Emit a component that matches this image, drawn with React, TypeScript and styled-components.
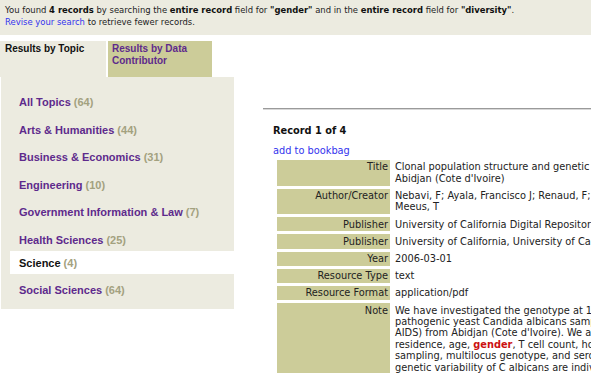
import React from "react";
import styled, { createGlobalStyle } from "styled-components";

const GlobalStyle = createGlobalStyle`
  html, body {
    margin: 0;
    padding: 0;
    background: #ffffff;
    overflow: hidden;
  }
  body {
    font-family: "DejaVu Sans", Verdana, sans-serif;
    color: #222;
  }
`;

const topics = [
  { name: "All Topics", count: 64 },
  { name: "Arts & Humanities", count: 44 },
  { name: "Business & Economics", count: 31 },
  { name: "Engineering", count: 10 },
  { name: "Government Information & Law", count: 7 },
  { name: "Health Sciences", count: 25 },
  { name: "Science", count: 4, active: true },
  { name: "Social Sciences", count: 64 },
];

const Page = styled.div`
  width: 591px;
  height: 373px;
  overflow: hidden;
`;

const Banner = styled.div`
  background: #ecebe0;
  padding: 4px 5px 7px;
  font-size: 8.45px;
  line-height: 12px;
  color: #222;
  white-space: nowrap;

  b {
    color: #111;
  }
`;

const BlueLink = styled.a`
  color: #3333ee;
  text-decoration: none;
  cursor: pointer;
`;

const Main = styled.div`
  display: flex;
  margin-top: 6px;
`;

const LeftCol = styled.div`
  width: 234px;
  flex-shrink: 0;
`;

const Tabs = styled.div`
  display: flex;
  gap: 2px;
`;

const Tab = styled.div<{ $active?: boolean }>`
  width: ${(p) => (p.$active ? "106px" : "104px")};
  height: 36px;
  box-sizing: border-box;
  padding: 2px 4px 0 ${(p) => (p.$active ? "5px" : "4px")};
  background: ${(p) => (p.$active ? "#ecebe0" : "#cccc99")};
  color: ${(p) => (p.$active ? "#111" : "#5e2a8c")};
  font-family: "Liberation Sans", Arial, sans-serif;
  font-weight: bold;
  font-size: 10px;
  line-height: 12px;
`;

const Panel = styled.ul`
  list-style: none;
  margin: 0 0 0 1px;
  padding: 9px 0 7.5px;
  background: #ecebe0;
  display: flex;
  flex-direction: column;
`;

const TopicRow = styled.li<{ $active?: boolean }>`
  height: 23px;
  margin: ${(p) => (p.$active ? "0" : "4.5px")} 0 0 9px;
  padding-left: 9px;
  display: flex;
  align-items: center;
  background: ${(p) => (p.$active ? "#ffffff" : "transparent")};
  font-family: "Liberation Sans", Arial, sans-serif;
  font-weight: bold;
  font-size: 11px;
  color: ${(p) => (p.$active ? "#111" : "#5e2a8c")};
  white-space: nowrap;
`;

const Count = styled.span`
  color: #a3a17f;
  margin-left: 3px;
`;

const RightCol = styled.div`
  flex: 1;
  min-width: 0;
  overflow: hidden;
  padding-top: 67px;
`;

const Rule = styled.div`
  margin-left: 29px;
  height: 1px;
  background: #9a9a9a;
  border-bottom: 1px solid #d8d8d8;
`;

const Content = styled.div`
  margin-left: 39px;
  font-size: 9.8px;
  line-height: 12px;
`;

const RecordHead = styled.div`
  margin-top: 15px;
  font-weight: bold;
  color: #111;
`;

const Bookbag = styled(BlueLink)`
  display: block;
  margin-top: 8px;
`;

const RecordTable = styled.table`
  width: max-content;
  margin: 0 0 0 1px;
  border-spacing: 3px;
  white-space: nowrap;
`;

const Label = styled.td`
  width: 111px;
  min-width: 111px;
  background: #cccc99;
  text-align: right;
  vertical-align: top;
  padding: 1.4px 2px 1.4px 0;
  line-height: 11.4px;
  color: #222;
`;

const Value = styled.td`
  vertical-align: top;
  padding: 1.4px 0 1.4px 2px;
  line-height: 11.4px;
  color: #222;
`;

const Hit = styled.b`
  color: #cc1111;
`;

const rows: { label: string; lines: React.ReactNode[] }[] = [
  {
    label: "Title",
    lines: [
      "Clonal population structure and genetic diversity of Candida albicans in AIDS patients from",
      "Abidjan (Cote d'Ivoire)",
    ],
  },
  {
    label: "Author/Creator",
    lines: [
      "Nebavi, F; Ayala, Francisco J; Renaud, F; Bertout, S; Eholie, S; Moussa, K; Mallie, M; de",
      "Meeus, T",
    ],
  },
  { label: "Publisher", lines: ["University of California Digital Repository"] },
  { label: "Publisher", lines: ["University of California, University of California, Irvine"] },
  { label: "Year", lines: ["2006-03-01"] },
  { label: "Resource Type", lines: ["text"] },
  { label: "Resource Format", lines: ["application/pdf"] },
  {
    label: "Note",
    lines: [
      "We have investigated the genotype at 11 polymorphic loci of 136 isolates of the",
      "pathogenic yeast Candida albicans sampled from 104 patients (HIV-positive and",
      "AIDS) from Abidjan (Cote d'Ivoire). We analysed the links between the patient's",
      <>
        residence, age, <Hit>gender</Hit>, T cell count, hospital ward, anatomical site and
        date of
      </>,
      "sampling, multilocus genotype, and serotype of the isolates. The results show that",
      "genetic variability of C albicans are individual-level factors of the host",
      "and that the structure of the population is clonal.",
    ],
  },
];

export default function App() {
  return (
    <Page>
      <GlobalStyle />
      <Banner>
        You found <b>4 records</b> by searching the <b>entire record</b> field for{" "}
        <b>"gender"</b> and in the <b>entire record</b> field for <b>"diversity"</b>.
        <br />
        <BlueLink>Revise your search</BlueLink> to retrieve fewer records.
      </Banner>
      <Main>
        <LeftCol>
          <Tabs>
            <Tab $active>Results by Topic</Tab>
            <Tab>
              Results by Data
              <br />
              Contributor
            </Tab>
          </Tabs>
          <Panel>
            {topics.map((t) => (
              <TopicRow key={t.name} $active={t.active}>
                {t.name}
                <Count>({t.count})</Count>
              </TopicRow>
            ))}
          </Panel>
        </LeftCol>
        <RightCol>
          <Rule />
          <Content>
            <RecordHead>Record 1 of 4</RecordHead>
            <Bookbag>add to bookbag</Bookbag>
            <RecordTable>
              <tbody>
                {rows.map((r, i) => (
                  <tr key={i}>
                    <Label>{r.label}</Label>
                    <Value>
                      {r.lines.map((l, j) => (
                        <React.Fragment key={j}>
                          {j > 0 && <br />}
                          {l}
                        </React.Fragment>
                      ))}
                    </Value>
                  </tr>
                ))}
              </tbody>
            </RecordTable>
          </Content>
        </RightCol>
      </Main>
    </Page>
  );
}
